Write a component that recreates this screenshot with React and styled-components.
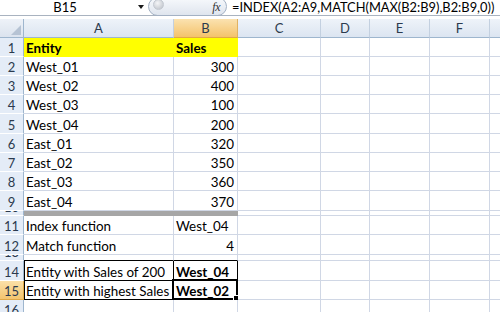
import React from 'react';
import styled, { createGlobalStyle } from 'styled-components';

const GlobalStyle = createGlobalStyle`
  html, body { margin: 0; padding: 0; background: #fff; }
  body { width: 500px; height: 312px; overflow: hidden; font-family: Lato, "Open Sans", sans-serif; }
  #root { width: 500px; height: 312px; overflow: hidden; }
`;

const GRID = '#d0d7e5';
const HEAD_LINE = '#9eb6ce';

const Screen = styled.div`
  width: 500px;
  height: 312px;
  overflow: hidden;
  background: #fff;
  display: flex;
  flex-direction: column;
`;

const FormulaBar = styled.div`
  display: flex;
  align-items: center;
  height: 15px;
  flex: 0 0 15px;
  border-bottom: 1px solid #a9b3c0;
  font-size: 13px;
  color: #000;
`;

const NameBox = styled.div`
  width: 130px;
  text-align: center;
  line-height: 15px;
`;

const DropArrow = styled.div`
  width: 0;
  height: 0;
  margin-left: 8px;
  margin-top: -2px;
  border-left: 3.5px solid transparent;
  border-right: 3.5px solid transparent;
  border-top: 4px solid #1a1a1a;
`;

const FxCapsule = styled.div`
  align-self: flex-end;
  margin-left: 4px;
  width: 79px;
  height: 19px;
  margin-bottom: -1px;
  box-sizing: border-box;
  border: 1px solid #a3b1c4;
  border-radius: 10px;
  background: linear-gradient(#f7f9fc, #dfe5ee);
  display: flex;
  align-items: center;
  justify-content: space-between;
  padding: 0 6px 0 4px;
`;

const Knob = styled.div`
  width: 9px;
  height: 9px;
  margin-top: -4px;
  border-radius: 50%;
  background: radial-gradient(circle at 40% 35%, #f4f5f7, #b9bec6);
  border: 1px solid #c3c8d0;
`;

const Fx = styled.span`
  font-family: "Liberation Serif", serif;
  font-style: italic;
  font-size: 12px;
  color: #333;
  margin-top: 2px;
  letter-spacing: -0.5px;
`;

const FormulaText = styled.div`
  margin-left: 5px;
  font-size: 12.85px;
  line-height: 15px;
  white-space: nowrap;
`;

const Spacer = styled.div`
  flex: 0 0 3px;
`;

const Sheet = styled.div`
  flex: 0 0 auto;
  display: grid;
  grid-template-columns: 24px 150px 64px 83px 49px 60px 60px 60px;
  grid-template-rows: ${p => p.$rows};
  font-size: 13.4px;
  color: #000;
`;

const Corner = styled.div`
  position: relative;
  box-sizing: border-box;
  background: linear-gradient(#eef2f8, #dbe3ee);
  border-right: 1px solid ${HEAD_LINE};
  border-bottom: 1px solid ${HEAD_LINE};
  &::after {
    content: '';
    position: absolute;
    right: 2px;
    bottom: 2px;
    width: 0;
    height: 0;
    border-left: 10px solid transparent;
    border-bottom: 10px solid #b6c3d4;
  }
`;

const ColHead = styled.div`
  box-sizing: border-box;
  display: flex;
  align-items: center;
  justify-content: center;
  color: #2b3a4e;
  font-size: 13px;
  background: ${p => p.$active
    ? 'linear-gradient(#fbe2b0, #f4c36b)'
    : 'linear-gradient(#eef3f9, #dce5f1)'};
  border-right: 1px solid ${p => (p.$active ? '#e0b262' : '#c3d0e0')};
  border-bottom: 1px solid ${p => (p.$active ? '#e0a847' : HEAD_LINE)};
`;

const RowHead = styled.div`
  box-sizing: border-box;
  display: flex;
  align-items: flex-end;
  justify-content: center;
  overflow: hidden;
  color: #2b3a4e;
  font-size: 13px;
  line-height: 16px;
  background: ${p => (p.$active ? 'linear-gradient(#fbe0a8, #f4c56f)' : '#e4ecf7')};
  border-right: 1px solid ${p => (p.$active ? '#e0a847' : HEAD_LINE)};
  border-bottom: 1px solid ${p => (p.$active ? '#e0a847' : '#fff')};
`;

const Cell = styled.div`
  position: relative;
  box-sizing: border-box;
  display: flex;
  align-items: flex-end;
  justify-content: ${p => (p.$right ? 'flex-end' : 'flex-start')};
  padding: 0 3px 0 2px;
  white-space: nowrap;
  overflow: ${p => (p.$selected ? 'visible' : 'hidden')};
  line-height: 16px;
  font-weight: ${p => (p.$bold ? 700 : 400)};
  background: ${p => p.$fill || '#fff'};
  border-right: 1px solid ${p => (p.$boxed ? '#000' : p.$fill || GRID)};
  border-bottom: 1px solid ${p => (p.$boxed || p.$darkBottom ? '#000' : p.$fill || GRID)};
  box-shadow: ${p => (p.$boxLeft ? 'inset 1px 0 0 #000' : 'none')};
`;

const Selection = styled.div`
  position: absolute;
  left: -2px;
  top: -2px;
  right: -1px;
  bottom: -1px;
  border: 2px solid #000;
  pointer-events: none;
`;

const FillHandle = styled.div`
  position: absolute;
  right: -4px;
  bottom: -4px;
  width: 5px;
  height: 5px;
  background: #000;
  border: 1px solid #fff;
`;

const rows = [
  { n: 1, h: 19, a: 'Entity', b: 'Sales', bold: true, fill: '#ffff00' },
  { n: 2, h: 19, a: 'West_01', b: '300', right: true },
  { n: 3, h: 19, a: 'West_02', b: '400', right: true },
  { n: 4, h: 19, a: 'West_03', b: '100', right: true },
  { n: 5, h: 20, a: 'West_04', b: '200', right: true },
  { n: 6, h: 19, a: 'East_01', b: '320', right: true },
  { n: 7, h: 19, a: 'East_02', b: '350', right: true },
  { n: 8, h: 19, a: 'East_03', b: '360', right: true },
  { n: 9, h: 20, a: 'East_04', b: '370', right: true },
  { n: 10, h: 5, a: '', b: '', fill: '#a6a6a6' },
  { n: 11, h: 19, a: 'Index function', b: 'West_04' },
  { n: 12, h: 20, a: 'Match function', b: '4', right: true },
  { n: 13, h: 6, a: '', b: '', darkBottom: true },
  { n: 14, h: 20, a: 'Entity with Sales of 200', b: 'West_04', boxed: true, boldB: true },
  { n: 15, h: 19, a: 'Entity with highest Sales', b: 'West_02', boxed: true, boldB: true, selected: true },
  { n: 16, h: 19, a: '', b: '' },
];

const cols = ['A', 'B', 'C', 'D', 'E', 'F', 'G'];

export default function App() {
  const template = ['19px', ...rows.map(r => `${r.h}px`)].join(' ');
  return (
    <Screen>
      <GlobalStyle />
      <FormulaBar>
        <NameBox>B15</NameBox>
        <DropArrow />
        <FxCapsule>
          <Knob />
          <Fx>fx</Fx>
        </FxCapsule>
        <FormulaText>=INDEX(A2:A9,MATCH(MAX(B2:B9),B2:B9,0))</FormulaText>
      </FormulaBar>
      <Spacer />
      <Sheet $rows={template}>
        <Corner />
        {cols.map(c => (
          <ColHead key={c} $active={c === 'B'}>{c === 'G' ? '' : c}</ColHead>
        ))}
        {rows.map(r => (
          <React.Fragment key={r.n}>
            <RowHead $active={r.selected}>{r.n}</RowHead>
            <Cell
              $bold={r.bold}
              $fill={r.fill}
              $boxed={r.boxed}
              $boxLeft={r.boxed}
              $darkBottom={r.darkBottom}
            >
              {r.a}
            </Cell>
            <Cell
              $right={r.right}
              $bold={r.bold || r.boldB}
              $fill={r.fill}
              $boxed={r.boxed}
              $darkBottom={r.darkBottom}
              $selected={r.selected}
            >
              {r.b}
              {r.selected && (
                <Selection>
                  <FillHandle />
                </Selection>
              )}
            </Cell>
            {cols.slice(2).map(c => (
              <Cell key={c} />
            ))}
          </React.Fragment>
        ))}
      </Sheet>
    </Screen>
  );
}
